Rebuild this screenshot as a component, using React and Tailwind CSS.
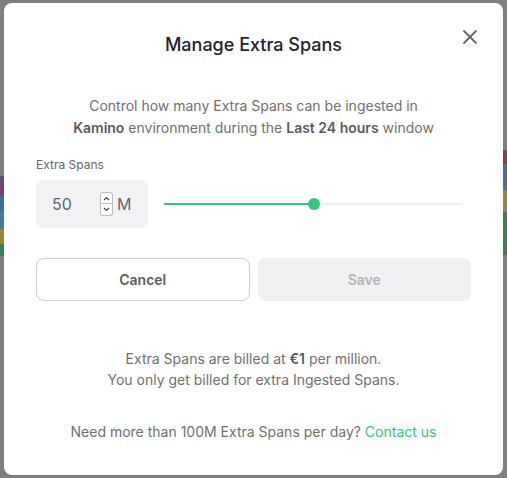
import { X } from 'lucide-react'

function Stepper() {
  return (
    <div className="flex flex-col">
      <span className="flex h-[12px] w-[13px] items-center justify-center rounded-t-[3px] border border-[#bdbdbd] bg-white">
        <svg width="7" height="5" viewBox="0 0 7 5" fill="none">
          <path d="M1 4l2.5-2.5L6 4" stroke="#444" strokeWidth="1.2" />
        </svg>
      </span>
      <span className="flex h-[12px] w-[13px] items-center justify-center rounded-b-[3px] border border-t-0 border-[#bdbdbd] bg-white">
        <svg width="7" height="5" viewBox="0 0 7 5" fill="none">
          <path d="M1 1l2.5 2.5L6 1" stroke="#444" strokeWidth="1.2" />
        </svg>
      </span>
    </div>
  )
}

export default function App() {
  const value = 50

  return (
    <div
      className="relative h-[478px] w-[507px] overflow-hidden bg-[#7f7f7f] px-[4px] pt-[3px]"
      style={{ fontFamily: 'Inter, "Noto Sans", sans-serif' }}
    >
      {/* dimmed page behind the dialog */}
      <div className="absolute left-0 top-[176px] flex w-[4px] flex-col">
        <div className="h-[8px] bg-[#5a4f80]" />
        <div className="h-[12px] bg-[#7a3f6a]" />
        <div className="h-[15px] bg-[#3f6c99]" />
        <div className="h-[18px] bg-[#4a7898]" />
        <div className="h-[15px] bg-[#8f8a3c]" />
        <div className="h-[12px] bg-[#3f7d57]" />
      </div>
      <div className="absolute right-0 top-[150px] flex w-[4px] flex-col">
        <div className="h-[14px] bg-[#8a3f4a]" />
        <div className="h-[26px] bg-[#4a6f99]" />
        <div className="h-[22px] bg-[#8f8a3c]" />
        <div className="h-[43px] bg-[#3f7d57]" />
      </div>

      <div className="relative flex h-[472px] flex-col rounded-[8px] bg-white px-[32px]">
        <button className="absolute right-[21px] top-[22px] text-[#666]">
          <X size={24} strokeWidth={1.8} />
        </button>

        <h2 className="mt-[29px] text-center text-[18px] font-medium leading-[26px] text-[#23232f]">Manage Extra Spans</h2>

        <p className="mt-[37px] text-center text-[14px] leading-[22px] text-[#707070]">
          Control how many Extra Spans can be ingested in
          <br />
          <b className="font-semibold text-[#5a5a5a]">Kamino</b> environment during the{' '}
          <b className="font-semibold text-[#5a5a5a]">Last 24 hours</b> window
        </p>

        <label className="mt-[18px] text-[12px] leading-[16px] text-[#666]">Extra Spans</label>

        <div className="mt-[7px] flex items-center gap-[16px]">
          <div className="flex h-[48px] w-[112px] items-center rounded-[8px] bg-[#f2f2f4] pl-[16px] pr-[12px]">
            <span className="w-[48px] text-[16px] text-[#666]">{value}</span>
            <Stepper />
            <span className="ml-[4px] text-[16px] text-[#666]">M</span>
          </div>
          <div className="relative mr-[8px] flex h-[12px] flex-1 items-center">
            <div className="h-[2px] w-full rounded-full bg-[#efefef]" />
            <div className="absolute left-0 h-[2px] rounded-full bg-[#37c47d]" style={{ width: `${value}%` }} />
            <div
              className="absolute h-[12px] w-[12px] -translate-x-1/2 rounded-full bg-[#37c47d]"
              style={{ left: `${value}%` }}
            />
          </div>
        </div>

        <div className="mt-[30px] grid grid-cols-2 gap-[8px]">
          <button className="h-[43px] rounded-[8px] border border-[#cfcfcf] bg-white text-[14px] font-semibold text-[#5c5c5c]">
            Cancel
          </button>
          <button className="h-[43px] rounded-[8px] bg-[#f1f1f3] text-[14px] font-semibold text-[#b3b3b3]">
            Save
          </button>
        </div>

        <p className="mt-[47px] text-center text-[14px] leading-[21px] text-[#707070]">
          Extra Spans are billed at <b className="font-semibold text-[#5a5a5a]">€1</b> per million.
          <br />
          You only get billed for extra Ingested Spans.
        </p>

        <p className="mt-[31px] text-center text-[14px] leading-[21px] text-[#707070]">
          Need more than 100M Extra Spans per day? <a className="text-[#37c47d]">Contact us</a>
        </p>
      </div>
    </div>
  )
}
